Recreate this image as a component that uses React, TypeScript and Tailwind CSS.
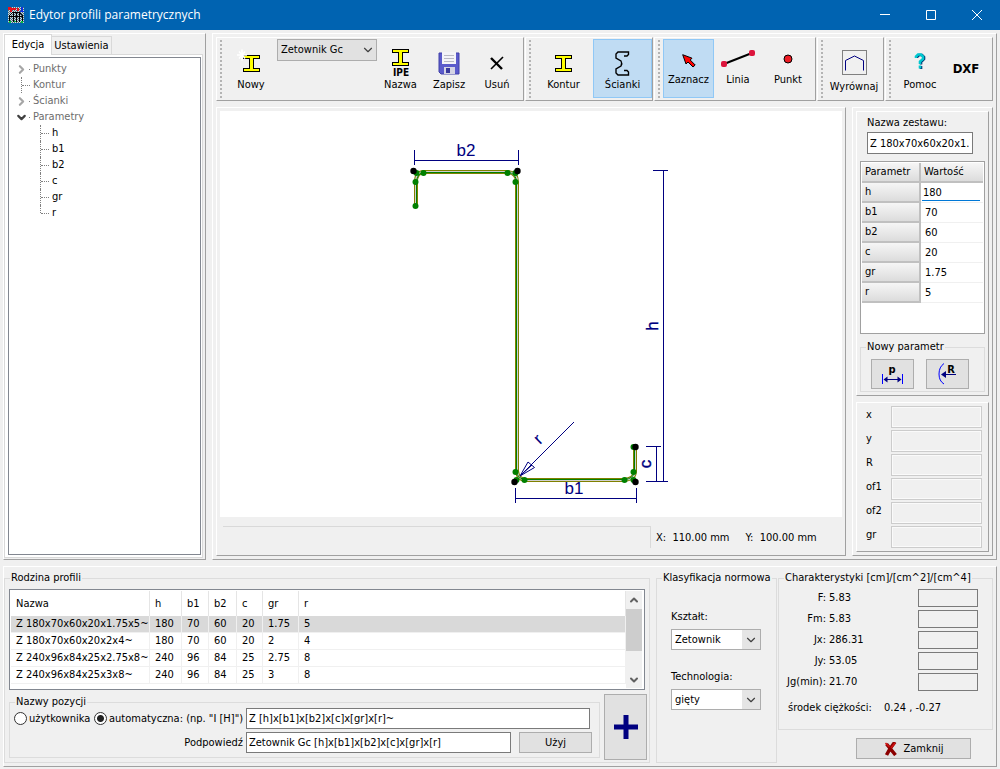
import type { ReactNode } from "react";
import { ChevronDown, ChevronRight, ChevronUp } from "lucide-react";
import clsx from "clsx";

const raised = "border border-t-white border-l-white border-r-[#a0a0a0] border-b-[#a0a0a0]";

const treeItems = [
  { name: "Punkty", state: "closed" },
  { name: "Kontur", state: "leaf" },
  { name: "Ścianki", state: "closed" },
  { name: "Parametry", state: "open" },
];

const params = [
  { name: "h", value: "180" },
  { name: "b1", value: "70" },
  { name: "b2", value: "60" },
  { name: "c", value: "20" },
  { name: "gr", value: "1.75" },
  { name: "r", value: "5" },
];

const columns = ["Nazwa", "h", "b1", "b2", "c", "gr", "r"];

const family = [
  ["Z 180x70x60x20x1.75x5~", "180", "70", "60", "20", "1.75", "5"],
  ["Z 180x70x60x20x2x4~", "180", "70", "60", "20", "2", "4"],
  ["Z 240x96x84x25x2.75x8~", "240", "96", "84", "25", "2.75", "8"],
  ["Z 240x96x84x25x3x8~", "240", "96", "84", "25", "3", "8"],
];

const coords = ["x", "y", "R", "of1", "of2", "gr"];

const characteristics = [
  { name: "F:", value: "5.83" },
  { name: "Fm:", value: "5.83" },
  { name: "Jx:", value: "286.31" },
  { name: "Jy:", value: "53.05" },
  { name: "Jg(min):", value: "21.70" },
];

const AppIcon = () => (
  <svg width="16" height="16" viewBox="0 0 16 16" shapeRendering="crispEdges">
    <defs>
      <pattern id="dither" width="2" height="2" patternUnits="userSpaceOnUse">
        <rect width="2" height="2" fill="#506878" />
        <rect width="1" height="1" fill="#c8dce0" />
        <rect x="1" y="1" width="1" height="1" fill="#c8dce0" />
      </pattern>
    </defs>
    <rect width="16" height="16" fill="url(#dither)" />
    <path d="M1.500 15V8.500l3-3h7l3 3V15M5.500 6v9M8.500 5v10M11.500 6v9M1 9.500h14" fill="none" stroke="#000" />
    <path d="M0 0h3v1h5v2H4v2H2V3H0zM9 1h2v3H9z" fill="#e8101c" />
    <path d="M13 0h2v4h1v1h-4V4h1z" fill="#1030e0" />
    <path d="M1 14h2v2H1zM6 14h2v1H6zM13 14h2v2h-2z" fill="#00c040" />
  </svg>
);

const BeamShape = () => (
  <path
    d="M.5.5h16v3h-6v10h6v3H.5v-3h6v-10h-6z"
    fill="#ffff00"
    stroke="#000"
    shapeRendering="crispEdges"
  />
);

const BeamIcon = ({ star = false }: { star?: boolean }) => (
  <svg width="17" height="18" viewBox="0 0 17 17" className="overflow-visible">
    <BeamShape />
    {star && <path d="M-1-5V6M-6 .5H4M-4-3l6 7M2-3l-6 7" stroke="#fff" strokeWidth="1.500" />}
  </svg>
);

const FloppyIcon = () => (
  <svg width="22" height="23" viewBox="0 0 22 23">
    <path d="M1 1h20v21H3l-2-2z" fill="#5a5acb" stroke="#4040a8" />
    <path d="M4 0h14v12H4z" fill="#f4f4f8" />
    <path d="M6 3.500h10M6 6.500h10M6 9.500h10" stroke="#b8b8c4" />
    <path d="M6 15h11v7H6z" fill="#d4d4e4" />
    <path d="M8 16h4v5H8z" fill="#38389c" />
  </svg>
);

const DeleteIcon = () => (
  <svg width="14" height="14" viewBox="0 0 14 14" fill="none" stroke="#000">
    <path d="M1 2L12 13" strokeWidth="2.400" />
    <path d="M13 1L1 13" strokeWidth="1.600" />
  </svg>
);

const WallsIcon = () => (
  <svg width="15" height="25" viewBox="0 0 15 25" fill="none" stroke="#000" strokeWidth="1.400">
    <path d="M9 5h3l1.500-1.500V1H3L1 3v4l5 3q1.500 2.500 0 5l-5 3v4l2 2h10.500v-3L12 19.500H9" />
  </svg>
);

const CursorIcon = () => (
  <svg width="14" height="14" viewBox="0 0 14 14">
    <path d="M.7.700l9.300 3.500-1.800 1.800 5 5-2.200 2-5-5L4 10z" fill="#f00" stroke="#000" />
  </svg>
);

const LineIcon = () => (
  <svg width="34" height="17" viewBox="0 0 34 17">
    <path d="M3 14L31 3" stroke="#000" strokeWidth="2" />
    <rect x="0" y="11" width="6" height="6" rx="2" fill="#dc143c" />
    <rect x="28" y="0" width="6" height="6" rx="2" fill="#dc143c" />
  </svg>
);

const PointIcon = () => (
  <svg width="10" height="10" viewBox="0 0 10 10">
    <circle cx="5" cy="5" r="4" fill="#ed1c24" stroke="#000" />
  </svg>
);

const AlignIcon = () => (
  <svg width="25" height="25" viewBox="0 0 25 25" fill="none">
    <rect x=".5" y=".5" width="24" height="24" stroke="#808080" />
    <path d="M3.500 20.500V10.500l9-4.500 9 4.500v10" stroke="#000080" />
  </svg>
);

const HelpIcon = () => (
  <svg width="12" height="16" viewBox="0 0 12 16" fill="none" strokeWidth="2.600">
    <path d="M3 5V4l2-2h3l2 2v2L7 9v2.500M7 13v3" stroke="#003070" />
    <path d="M2 5V3.500L4 1.500h3l2 2V6L6 8.500V11M6 12.500v3" stroke="#00c8d0" />
  </svg>
);

const Grip = () => (
  <div className="mx-[3px] my-[2px] w-[2px] shrink-0 bg-[repeating-linear-gradient(#b4b4b4_0_2px,transparent_2px_4px)]" />
);

type ToolButtonProps = {
  icon: ReactNode;
  label: string;
  width: string;
  iconHeight?: string;
  active?: boolean;
};

const ToolButton = ({ icon, label, width, iconHeight = "h-[38px] pt-2", active }: ToolButtonProps) => (
  <button
    className={clsx(
      "mt-px flex h-[59px] shrink-0 flex-col items-center border whitespace-nowrap",
      width,
      active ? "border-[#90c8f6] bg-[#c0dcf3]" : "border-transparent",
    )}
  >
    <span className={clsx("flex shrink-0 items-center justify-center", iconHeight)}>{icon}</span>
    <span>{label}</span>
  </button>
);

const Toolbar = ({ width, children }: { width: string; children: ReactNode }) => (
  <div className={clsx("flex h-16", raised, width)}>
    <Grip />
    {children}
  </div>
);

const Header = () => (
  <header className="flex h-[30px] items-center bg-[#0063b1] pl-2 text-white">
    <AppIcon />
    <h1 className="ml-[5px] flex-1 font-['Open_Sans','Noto_Sans',sans-serif] text-[12px]">Edytor profili parametrycznych</h1>
    <button aria-label="Minimalizuj" className="flex h-full w-[46px] items-center justify-center">
      <svg width="10" height="10" stroke="#fff"><path d="M0 4.500h10" /></svg>
    </button>
    <button aria-label="Maksymalizuj" className="flex h-full w-[46px] items-center justify-center">
      <svg width="10" height="10" stroke="#fff" fill="none"><path d="M.5.5h9v9h-9z" /></svg>
    </button>
    <button aria-label="Zamknij okno" className="flex h-full w-[46px] items-center justify-center">
      <svg width="10" height="10" stroke="#fff"><path d="M0 0l10 10M10 0L0 10" /></svg>
    </button>
  </header>
);

const TreePanel = () => (
  <aside className={clsx("flex w-[203px] shrink-0 flex-col", raised)}>
    <div className="flex items-end">
      <button className="z-10 -mb-px h-[21px] w-[48px] border border-b-0 border-[#d9d9d9] bg-white">Edycja</button>
      <button className="h-[18px] w-[60px] border border-b-0 border-l-0 border-[#d9d9d9]">Ustawienia</button>
    </div>
    <div className="mr-[2px] mb-px flex flex-1 flex-col border border-[#d9d9d9] bg-white py-[2px] pr-px pl-[3px]">
      <ul className="flex-1 border border-[#828790] pt-[3px] pl-[6px] text-[#6d6d6d]">
        {treeItems.map((item) => (
          <li key={item.name} className="flex h-4 items-center">
            {item.state === "leaf" ? (
              <span className="ml-[6px] h-4 w-px border-l border-dotted border-[#808080]" />
            ) : item.state === "open" ? (
              <ChevronDown size={13} strokeWidth={4} className="text-[#404040]" />
            ) : (
              <ChevronRight size={13} strokeWidth={4} className="text-[#a6a6a6]" />
            )}
            <span
              className={clsx(
                "mr-[3px] border-t border-dotted border-[#808080]",
                item.state === "leaf" ? "w-2" : "ml-px w-px",
              )}
            />
            {item.name}
          </li>
        ))}
        <li>
          <ul className="ml-[25px] text-black">
            {params.map((p, i) => (
              <li key={p.name} className="flex h-4 items-center">
                <span className={clsx("border-l border-dotted border-[#808080]", i === params.length - 1 ? "h-2 self-start" : "h-4")} />
                <span className="mr-[3px] w-2 border-t border-dotted border-[#808080]" />
                {p.name}
              </li>
            ))}
          </ul>
        </li>
      </ul>
    </div>
  </aside>
);

const Toolbars = () => (
  <div className="flex gap-px">
    <Toolbar width="w-[308px]">
      <ToolButton icon={<BeamIcon star />} label="Nowy" width="w-[52px]" />
      <div className="relative mt-px h-[22px] w-[100px] shrink-0">
        <select aria-label="Typ profilu" className="h-full w-full appearance-none border border-[#adadad] bg-[#e1e1e1] pl-[3px]">
          <option>Zetownik Gc</option>
        </select>
        <ChevronDown size={14} strokeWidth={2} className="pointer-events-none absolute top-1 right-[2px] text-[#404040]" />
      </div>
      <ToolButton
        icon={
          <svg width="18" height="28" viewBox="0 0 18 28" className="overflow-visible">
            <BeamShape />
            <text x="9" y="27" textAnchor="middle" className="text-[10px] font-bold">IPE</text>
          </svg>
        }
        label="Nazwa"
        width="w-[47px]"
      />
      <ToolButton icon={<FloppyIcon />} label="Zapisz" width="w-[50px]" />
      <ToolButton icon={<DeleteIcon />} label="Usuń" width="w-[46px]" />
    </Toolbar>
    <Toolbar width="w-[128px]">
      <ToolButton icon={<BeamIcon />} label="Kontur" width="w-[59px]" />
      <ToolButton icon={<WallsIcon />} label="Ścianki" width="w-[59px]" active />
    </Toolbar>
    <Toolbar width="w-[162px]">
      <ToolButton icon={<CursorIcon />} label="Zaznacz" width="w-[51px]" iconHeight="h-[33px] pt-2" active />
      <ToolButton icon={<LineIcon />} label="Linia" width="w-[48px]" iconHeight="h-[33px] pt-1" />
      <ToolButton icon={<PointIcon />} label="Punkt" width="w-[52px]" iconHeight="h-[33px] pt-1" />
    </Toolbar>
    <Toolbar width="w-[67px]">
      <ToolButton icon={<AlignIcon />} label="Wyrównaj" width="w-[56px]" iconHeight="h-[40px] pt-1" />
    </Toolbar>
    <Toolbar width="min-w-[108px] flex-1">
      <ToolButton icon={<HelpIcon />} label="Pomoc" width="w-[52px]" iconHeight="h-[38px] pt-1" />
      <button className="h-full w-[40px] text-[13px] font-bold">DXF</button>
    </Toolbar>
  </div>
);

const nodes = [
  [415, 206], [415, 182], [416, 173], [423, 173], [507, 173], [515, 173], [515, 182],
  [515, 472], [516, 480], [524, 480], [624, 480], [633, 480], [633, 472], [633, 447],
];

const corners = [[413, 171], [517, 171], [514, 482], [635, 447], [635, 482]];

const outline = "M416 206V182Q416 172 424 172H508Q517 173 517 182V471Q518 480 526 480H624Q635 479 635 471V447";

// Section preview: wall outline, nodes and dimension lines
const Drawing = () => (
  <svg viewBox="220 111 622 406" className="min-h-0 w-full flex-1 bg-white">
    <g fill="none">
      <path d={outline} stroke="#808000" strokeWidth="4" />
      <path d={outline} stroke="#d0d0d0" strokeWidth="2" />
      <path
        d="M416.500 206V182Q417 173 424 172.500H508Q516 173 516.500 182V471Q517 479 526 479.500H624Q634 479 634.500 471V447"
        stroke="#008000"
      />
    </g>
    {nodes.map(([x, y]) => (
      <circle key={`${x}-${y}`} cx={x + 0.5} cy={y} r="3" fill="#008000" />
    ))}
    {corners.map(([x, y]) => (
      <circle key={`${x}-${y}`} cx={x + 0.5} cy={y} r="3.200" fill="#000" />
    ))}
    <g fill="none" stroke="#000080" shapeRendering="crispEdges">
      <path d="M414.500 160.500H518.500M414.500 150v15M518.500 150v15" />
      <path d="M515.500 498.500H636.500M515.500 488v15M636.500 488v15" />
      <path d="M663.500 170V481M653 170.500h15M646 481.500h22" />
      <path d="M656.500 446V481M646 446.500h15" />
    </g>
    <path d="M574 422L520 476M520 476L528 462L534.500 467.500ZM520 476l12-11" fill="none" stroke="#000080" />
    <g fill="#000080" textAnchor="middle" className="font-['Liberation_Sans',sans-serif] text-[17px]">
      <text x="466" y="156">b2</text>
      <text x="574" y="494">b1</text>
      <text transform="translate(658 326) rotate(-90)" stroke="#000080" strokeWidth=".4">h</text>
      <text transform="translate(651 464) rotate(-90)" stroke="#000080" strokeWidth=".4">c</text>
      <text transform="translate(542 443) rotate(-45)">r</text>
    </g>
  </svg>
);

const CanvasPanel = () => (
  <section className={clsx("flex min-w-0 flex-1 flex-col p-[3px]", raised)}>
    <Drawing />
    <div className="flex h-[35px] pt-[9px] pl-[3px]">
      <div className="mb-1 flex-1 border-t border-r border-[#d9d9d9]" />
      <div className="flex w-[191px] gap-4 pt-[5px] pl-[5px]">
        <span>X:&nbsp; 110.00 mm</span>
        <span>Y:&nbsp; 100.00 mm</span>
      </div>
    </div>
  </section>
);

const headCell = "border-b-2 border-[#c0c0c0] bg-linear-to-b from-[#f6f6f6] to-[#dcdcdc] py-0 text-left font-normal";

const ParamsPanel = () => (
  <section className={clsx("flex w-[141px] shrink-0 flex-col gap-[6px] p-[3px]", raised)}>
    <div className={clsx("flex flex-1 flex-col p-[3px]", raised)}>
      <label htmlFor="setName" className="mt-px ml-[7px]">Nazwa zestawu:</label>
      <input
        id="setName"
        defaultValue="Z 180x70x60x20x1.75x5~"
        className="mt-[2px] ml-[7px] h-[22px] w-[106px] border border-[#7a7a7a] bg-white px-[2px]"
      />
      <div className="mt-[7px] flex-1 border border-[#a0a0a0] bg-white p-px">
        <table className="w-full table-fixed border-separate border-spacing-0">
          <colgroup>
            <col className="w-[59px]" />
            <col />
          </colgroup>
          <thead>
            <tr className="h-5">
              <th className={clsx(headCell, "border-r-2 pl-[3px]")}>Parametr</th>
              <th className={clsx(headCell, "pl-[3px]")}>Wartość</th>
            </tr>
          </thead>
          <tbody>
            {params.map((p, i) => (
              <tr key={p.name} className="h-5">
                <th className={clsx(headCell, "border-r-2 pl-[3px]")}>{p.name}</th>
                <td className="border-b border-[#f0f0f0] p-0">
                  <input
                    aria-label={p.name}
                    defaultValue={p.value}
                    className={clsx(
                      "block h-4 outline-none",
                      i === 0 ? "ml-px w-[58px] border-b border-[#0078d7] px-px" : "w-full px-1",
                    )}
                  />
                </td>
              </tr>
            ))}
          </tbody>
        </table>
      </div>
      <fieldset className="mt-[6px] border border-[#dcdcdc] pb-[2px]">
        <legend className="ml-[5px] px-px">Nowy parametr</legend>
        <div className="mt-[5px] flex gap-3 pl-[10px]">
          <button aria-label="Parametr p" className="flex h-[30px] w-[43px] items-center justify-center border border-[#adadad] bg-[#e1e1e1]">
            <svg width="22" height="22" viewBox="0 0 22 22" stroke="#000080">
              <text x="10" y="10" textAnchor="middle" stroke="none" className="text-[11px] font-bold">p</text>
              <path d="M.5 11v10M20.500 11v10" stroke="#0000ff" />
              <path d="M2 16.500h17" />
              <path d="M1.500 16.500l4-3v6zM19.500 16.500l-4-3v6z" fill="#000080" stroke="none" />
            </svg>
          </button>
          <button aria-label="Promień R" className="flex h-[30px] w-[43px] items-center justify-center border border-[#adadad] bg-[#e1e1e1]">
            <svg width="20" height="22" viewBox="0 0 20 22" fill="none">
              <path d="M6 .5Q1 4 1 11T6 21" stroke="#0000ff" />
              <path d="M4 11.500h14" stroke="#000080" />
              <path d="M3 11.500l5-3.500v7z" fill="#000080" />
              <text x="13" y="10" textAnchor="middle" fill="#000" className="text-[11px] font-bold">R</text>
            </svg>
          </button>
        </div>
      </fieldset>
    </div>
    <div className={clsx("flex flex-col gap-[2px] py-[3px] pr-[6px] pl-[9px]", raised)}>
      {coords.map((name) => (
        <label key={name} className="flex items-center">
          <span className="w-[25px] pb-1">{name}</span>
          <input disabled className="h-[22px] min-w-0 flex-1 border border-[#ccc] bg-[#f0f0f0] shadow-[inset_0_0_0_1px_#fafafa]" />
        </label>
      ))}
    </div>
  </section>
);

const FamilyTable = () => (
  <div className="mt-1 flex h-[101px] border border-[#828790] bg-white p-px">
    <div className="flex-1 overflow-hidden">
      <table className="w-full table-fixed border-separate border-spacing-0">
        <colgroup>
          <col className="w-[139px]" />
          <col className="w-[32px]" />
          <col className="w-[27px]" />
          <col className="w-[28px]" />
          <col className="w-[26px]" />
          <col className="w-[36px]" />
          <col />
        </colgroup>
        <thead>
          <tr className="h-[25px]">
            {columns.map((c) => (
              <th key={c} className="border-r border-[#e5e5e5] p-0 pl-[5px] text-left font-normal">{c}</th>
            ))}
          </tr>
        </thead>
        <tbody>
          {family.map((row, i) => (
            <tr key={row[0]} className={clsx("h-[17px]", i === 0 && "bg-[#d9d9d9]")}>
              {row.map((cell, j) => (
                <td key={j} className="border-r border-b border-[#f0f0f0] p-0 pl-[5px] leading-4 whitespace-nowrap">{cell}</td>
              ))}
            </tr>
          ))}
        </tbody>
      </table>
    </div>
    <div className="mr-px flex w-4 flex-col items-center bg-[#f0f0f0] text-[#606060]">
      <ChevronUp size={12} strokeWidth={4} className="my-[3px]" />
      <div className="h-[42px] w-full bg-[#cdcdcd]" />
      <ChevronDown size={12} strokeWidth={4} className="mt-auto mb-[2px]" />
    </div>
  </div>
);

const radio =
  "h-[13px] w-[13px] shrink-0 appearance-none rounded-full border border-[#333] bg-white checked:bg-[radial-gradient(circle,#222_0_3px,white_4px)]";

const NamesGroup = () => (
  <div className="mt-1 flex gap-1">
    <fieldset className="mt-[2px] flex-1 self-start border border-[#dcdcdc] pb-[4px]">
      <legend className="ml-[5px] px-px leading-3">Nazwy pozycji</legend>
      <div className="flex flex-col gap-[3px] pr-[7px] pl-1">
        <div className="flex items-center pr-[2px] whitespace-nowrap">
          <label className="flex w-[80px] items-center gap-[2px]">
            <input type="radio" name="naming" className={radio} />
            użytkownika
          </label>
          <label className="flex w-[152px] items-center gap-[2px]">
            <input type="radio" name="naming" defaultChecked className={radio} />
            automatyczna: (np. "I [H]")
          </label>
          <input
            aria-label="Wzór nazwy"
            defaultValue="Z [h]x[b1]x[b2]x[c]x[gr]x[r]~"
            className="h-[21px] min-w-0 flex-1 border border-[#7a7a7a] bg-white px-[2px]"
          />
        </div>
        <div className="flex items-center">
          <label htmlFor="hint" className="w-[232px] pr-[3px] text-right">Podpowiedź</label>
          <input
            id="hint"
            defaultValue="Zetownik Gc [h]x[b1]x[b2]x[c]x[gr]x[r]"
            className="h-[21px] min-w-0 flex-1 border border-[#7a7a7a] bg-white px-[2px]"
          />
          <button className="ml-2 h-[21px] w-[73px] border border-[#adadad] bg-[#e1e1e1]">Użyj</button>
        </div>
      </div>
    </fieldset>
    <button aria-label="Dodaj" className="-mr-[2px] flex h-[66px] w-[43px] items-center justify-center border border-[#adadad] bg-[#e1e1e1]">
      <svg width="26" height="26" stroke="#000080" strokeWidth="5">
        <path d="M13 1v24M1 13h24" />
      </svg>
    </button>
  </div>
);

const ComboBox = ({ id, label, value }: { id: string; label: string; value: string }) => (
  <div>
    <label htmlFor={id}>{label}</label>
    <div className="relative mt-[5px] h-[21px] w-[90px]">
      <select id={id} className="h-full w-full appearance-none border border-[#adadad] bg-white pl-[3px]">
        <option>{value}</option>
      </select>
      <span className="pointer-events-none absolute top-px right-px bottom-px flex w-[18px] items-center justify-center bg-[#e5e5e5]">
        <ChevronDown size={14} strokeWidth={2} className="text-[#404040]" />
      </span>
    </div>
  </div>
);

const BottomPanel = () => (
  <section className={clsx("mt-[6px] flex gap-[6px] pt-1 pb-[3px]", raised)}>
    <fieldset className="min-w-0 flex-1 border border-[#dcdcdc] px-1 pb-[2px]">
      <legend className="ml-px px-px">Rodzina profili</legend>
      <FamilyTable />
      <NamesGroup />
    </fieldset>
    <div className="flex gap-px pr-[3px]">
      <fieldset className="w-[121px] border border-[#dcdcdc]">
        <legend className="ml-[5px] px-px whitespace-nowrap">Klasyfikacja normowa</legend>
        <div className="flex flex-col gap-5 pt-[25px] pl-[14px]">
          <ComboBox id="shape" label="Kształt:" value="Zetownik" />
          <ComboBox id="technology" label="Technologia:" value="gięty" />
        </div>
      </fieldset>
      <div className="flex w-[215px] flex-col">
        <fieldset className="border border-[#dcdcdc] pb-[14px]">
          <legend className="ml-[5px] px-px whitespace-nowrap">Charakterystyki [cm]/[cm^2]/[cm^4]</legend>
          <div className="flex flex-col gap-[3px] pt-1">
            {characteristics.map((c) => (
              <label key={c.name} className="flex h-[18px] items-center pr-[14px]">
                <span className="w-[47px] text-right">{c.name}</span>
                <span className="ml-[3px] flex-1">{c.value}</span>
                <input disabled className="h-[18px] w-[60px] border border-[#7a7a7a] bg-[#f0f0f0]" />
              </label>
            ))}
          </div>
          <p className="mt-[10px] flex pl-[9px]">
            <span className="w-[96px]">środek ciężkości:</span>
            <span>0.24 , -0.27</span>
          </p>
        </fieldset>
        <button className="mt-2 mr-[22px] flex h-[21px] w-[115px] items-center justify-center gap-[6px] self-end border border-[#adadad] bg-[#e1e1e1]">
          <svg width="14" height="14" viewBox="0 0 14 14" fill="none">
            <path d="M2.500 2L11.500 13M11 0Q6 6 2.500 13" stroke="#8b0000" strokeWidth="3.500" />
            <path d="M1.500 1l4 4M11 1L7 6" stroke="#d01010" strokeWidth="1.500" />
          </svg>
          Zamknij
        </button>
      </div>
    </div>
  </section>
);

const App = () => (
  <div className="flex min-h-screen flex-col bg-[#f0f0f0] font-['DejaVu_Sans_Condensed','Noto_Sans',sans-serif] text-[11px] leading-[14px] text-black">
    <Header />
    <main className="flex flex-1 flex-col p-[3px]">
      <div className="flex flex-1 gap-[6px]">
        <TreePanel />
        <div className={clsx("flex min-w-0 flex-1 flex-col gap-[6px] p-[3px]", raised)}>
          <Toolbars />
          <div className="flex flex-1 gap-[6px]">
            <CanvasPanel />
            <ParamsPanel />
          </div>
        </div>
      </div>
      <BottomPanel />
    </main>
  </div>
);

export default App;
